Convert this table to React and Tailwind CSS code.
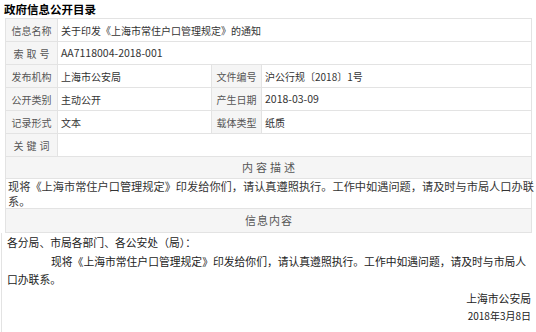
import React from "react";

const font = { fontFamily: '"Microsoft YaHei","Noto Sans CJK SC",sans-serif' };

function Label({ children, className = "" }) {
  return (
    <div className={`flex items-center justify-center bg-[#f5f5f5] text-[#555] border-r border-b border-[#e3e3e3] ${className}`}>
      {children}
    </div>
  );
}

function Value({ children, className = "" }) {
  return (
    <div className={`flex items-center pl-[3px] text-[#333] border-r border-b border-[#e3e3e3] ${className}`}>
      {children}
    </div>
  );
}

export default function App() {
  return (
    <div className="w-[536px] h-[332px] bg-white overflow-hidden" style={font}>
      <div className="h-[18px] pl-[4px] pt-[1px] text-[11.5px] font-bold text-black leading-[16px]">
        政府信息公开目录
      </div>
      <div className="ml-[5px] w-[527px] border-t border-l border-[#e3e3e3] text-[10px]">
        <div className="grid grid-cols-[52px_1fr] h-[23px]">
          <Label>信息名称</Label>
          <Value>关于印发《上海市常住户口管理规定》的通知</Value>
        </div>
        <div className="grid grid-cols-[52px_1fr] h-[23px]">
          <Label className="tracking-[3px] pl-[3px]">索取号</Label>
          <Value className="text-[10.5px]">AA7118004-2018-001</Value>
        </div>
        <div className="grid grid-cols-[52px_154px_50px_1fr] h-[23px]">
          <Label>发布机构</Label>
          <Value>上海市公安局</Value>
          <Label>文件编号</Label>
          <Value>沪公行规〔2018〕1号</Value>
        </div>
        <div className="grid grid-cols-[52px_154px_50px_1fr] h-[23px]">
          <Label>公开类别</Label>
          <Value>主动公开</Value>
          <Label>产生日期</Label>
          <Value className="text-[10.5px]">2018-03-09</Value>
        </div>
        <div className="grid grid-cols-[52px_154px_50px_1fr] h-[23px]">
          <Label>记录形式</Label>
          <Value>文本</Value>
          <Label>载体类型</Label>
          <Value>纸质</Value>
        </div>
        <div className="grid grid-cols-[52px_1fr] h-[23px]">
          <Label className="tracking-[3px] pl-[3px]">关键词</Label>
          <Value></Value>
        </div>
        <div className="h-[22px] flex items-center justify-center bg-[#f5f5f5] text-[#555] text-[11px] tracking-[3px] pl-[3px] border-r border-b border-[#e3e3e3]">
          内容描述
        </div>
        <div className="h-[30px] pl-[2px] pt-0 text-[11.2px] leading-[15px] text-[#333] whitespace-nowrap border-r border-b border-[#e3e3e3]">
          现将《上海市常住户口管理规定》印发给你们，请认真遵照执行。工作中如遇问题，请及时与市局人口办联
          <br />
          系。
        </div>
        <div className="h-[24px] flex items-center justify-center bg-[#f5f5f5] text-[#555] text-[11px] tracking-[1px] pl-[1px] border-r border-b border-[#e3e3e3]">
          信息内容
        </div>
      </div>
      <div className="ml-[1px] w-[531px] h-[100px] border-l border-[#e3e3e3] pl-[5px] pr-[1px] pt-0 text-[10.8px] leading-[19px] text-[#222]">
        <div>各分局、市局各部门、各公安处（局）：</div>
        <div className="indent-[44px] leading-[18px]">
          现将《上海市常住户口管理规定》印发给你们，请认真遵照执行。工作中如遇问题，请及时与市局人口办联系。
        </div>
        <div className="text-right mt-[1px] leading-[18px]">上海市公安局</div>
        <div className="text-right text-[10px] leading-[18px]">2018年3月8日</div>
      </div>
    </div>
  );
}
